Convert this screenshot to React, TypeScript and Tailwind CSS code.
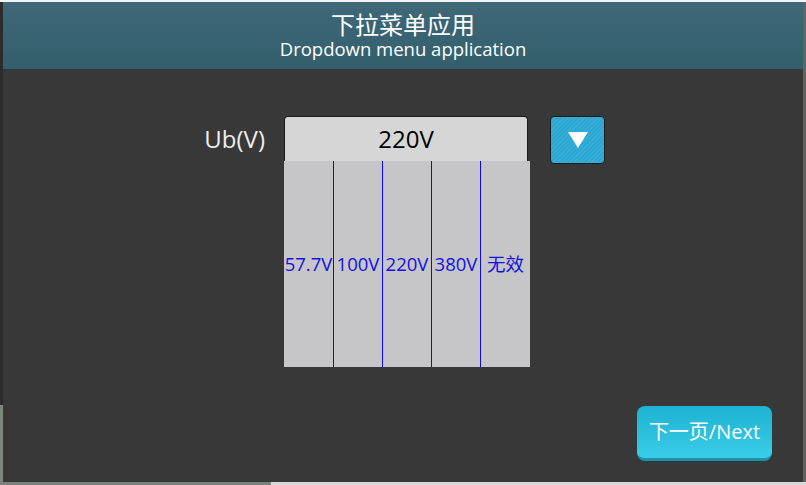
import React from "react"

const options = ["57.7V", "100V", "220V", "380V", "无效"]

const font = { fontFamily: '"Open Sans", "Noto Sans CJK SC", sans-serif' }

export default function App() {
  return (
    <div className="w-[806px] h-[485px] flex flex-col bg-[#6a716b] overflow-hidden" style={font}>
      {/* top edge */}
      <div className="h-[2px] bg-[#f4f4f4]" />
      <div className="flex flex-1">
        <div className="w-[3px] flex flex-col">
          <div className="h-[403px] bg-[#2c2c2c]" />
          <div className="flex-1 bg-[#7d857e]" />
        </div>

        {/* main panel */}
        <div className="w-[800px] flex flex-col bg-[#383838]">
          {/* Header */}
          <div className="h-[67px] flex flex-col items-center bg-gradient-to-b from-[#3f6879] to-[#335f6c] text-white">
            <div className="text-[24px] leading-[26px] mt-[10px]">下拉菜单应用</div>
            <div className="text-[18.5px] leading-[22px]">Dropdown menu application</div>
          </div>

          <div className="flex-1 flex flex-col">
            <div className="flex items-start mt-[47px] pl-[181px]">
              <div className="w-[81px] h-[45px] flex items-center justify-end text-[24px] text-[#eeeeee]">
                Ub(V)
              </div>
              <div className="ml-[19px] flex flex-col">
                {/* select box */}
                <div className="w-[244px] h-[45px] flex items-center justify-center bg-[#d6d6d6] border border-b-0 border-[#1c1c1c] rounded-t-[4px] text-[24px] text-black">
                  220V
                </div>
                {/* open list */}
                <div className="w-[246px] h-[206px] flex bg-[#c6c5c8]">
                  {options.map((o, i) => (
                    <React.Fragment key={o}>
                      <div
                        className={
                          i === 0
                            ? "w-[49px] flex items-center justify-center text-[18.5px] text-[#1212e0] whitespace-nowrap"
                            : i < options.length - 1
                              ? "w-[48px] flex items-center justify-center text-[18.5px] text-[#1212e0] whitespace-nowrap"
                              : "flex-1 flex items-center justify-center text-[18.5px] text-[#1212e0] whitespace-nowrap"
                        }
                      >
                        {o}
                      </div>
                      {i < options.length - 1 && <div className="w-[1px] bg-[#0a0af0]" />}
                    </React.Fragment>
                  ))}
                </div>
              </div>
              {/* arrow button */}
              <button
                className="ml-[20px] w-[55px] h-[48px] flex items-center justify-center rounded-[4px] border border-[#1a1a1a] bg-[#2ba8d4]"
                style={{
                  backgroundImage:
                    "repeating-linear-gradient(135deg, rgba(255,255,255,0.07) 0px, rgba(255,255,255,0.07) 1px, transparent 1px, transparent 3px)",
                }}
              >
                <svg width="22" height="18" viewBox="0 0 22 18">
                  <polygon points="1,1 21,1 11,17" fill="#ffffff" />
                </svg>
              </button>
            </div>

            <div className="flex-1 flex items-end justify-end pr-[31px] pb-[21px]">
              <button className="w-[135px] h-[55px] rounded-[8px] bg-gradient-to-b from-[#1cb2d2] to-[#3acde9] border-b-[3px] border-[#1a93ad] text-white text-[20px] flex items-center justify-center">
                下一页/Next
              </button>
            </div>
          </div>
        </div>

        <div className="w-[3px] bg-[#5e6661]" />
      </div>
      {/* bottom edge */}
      <div className="h-[3px] flex">
        <div className="w-[271px] bg-[#7a827b]" />
        <div className="flex-1 bg-[#d8d8d8]" />
      </div>
    </div>
  )
}
